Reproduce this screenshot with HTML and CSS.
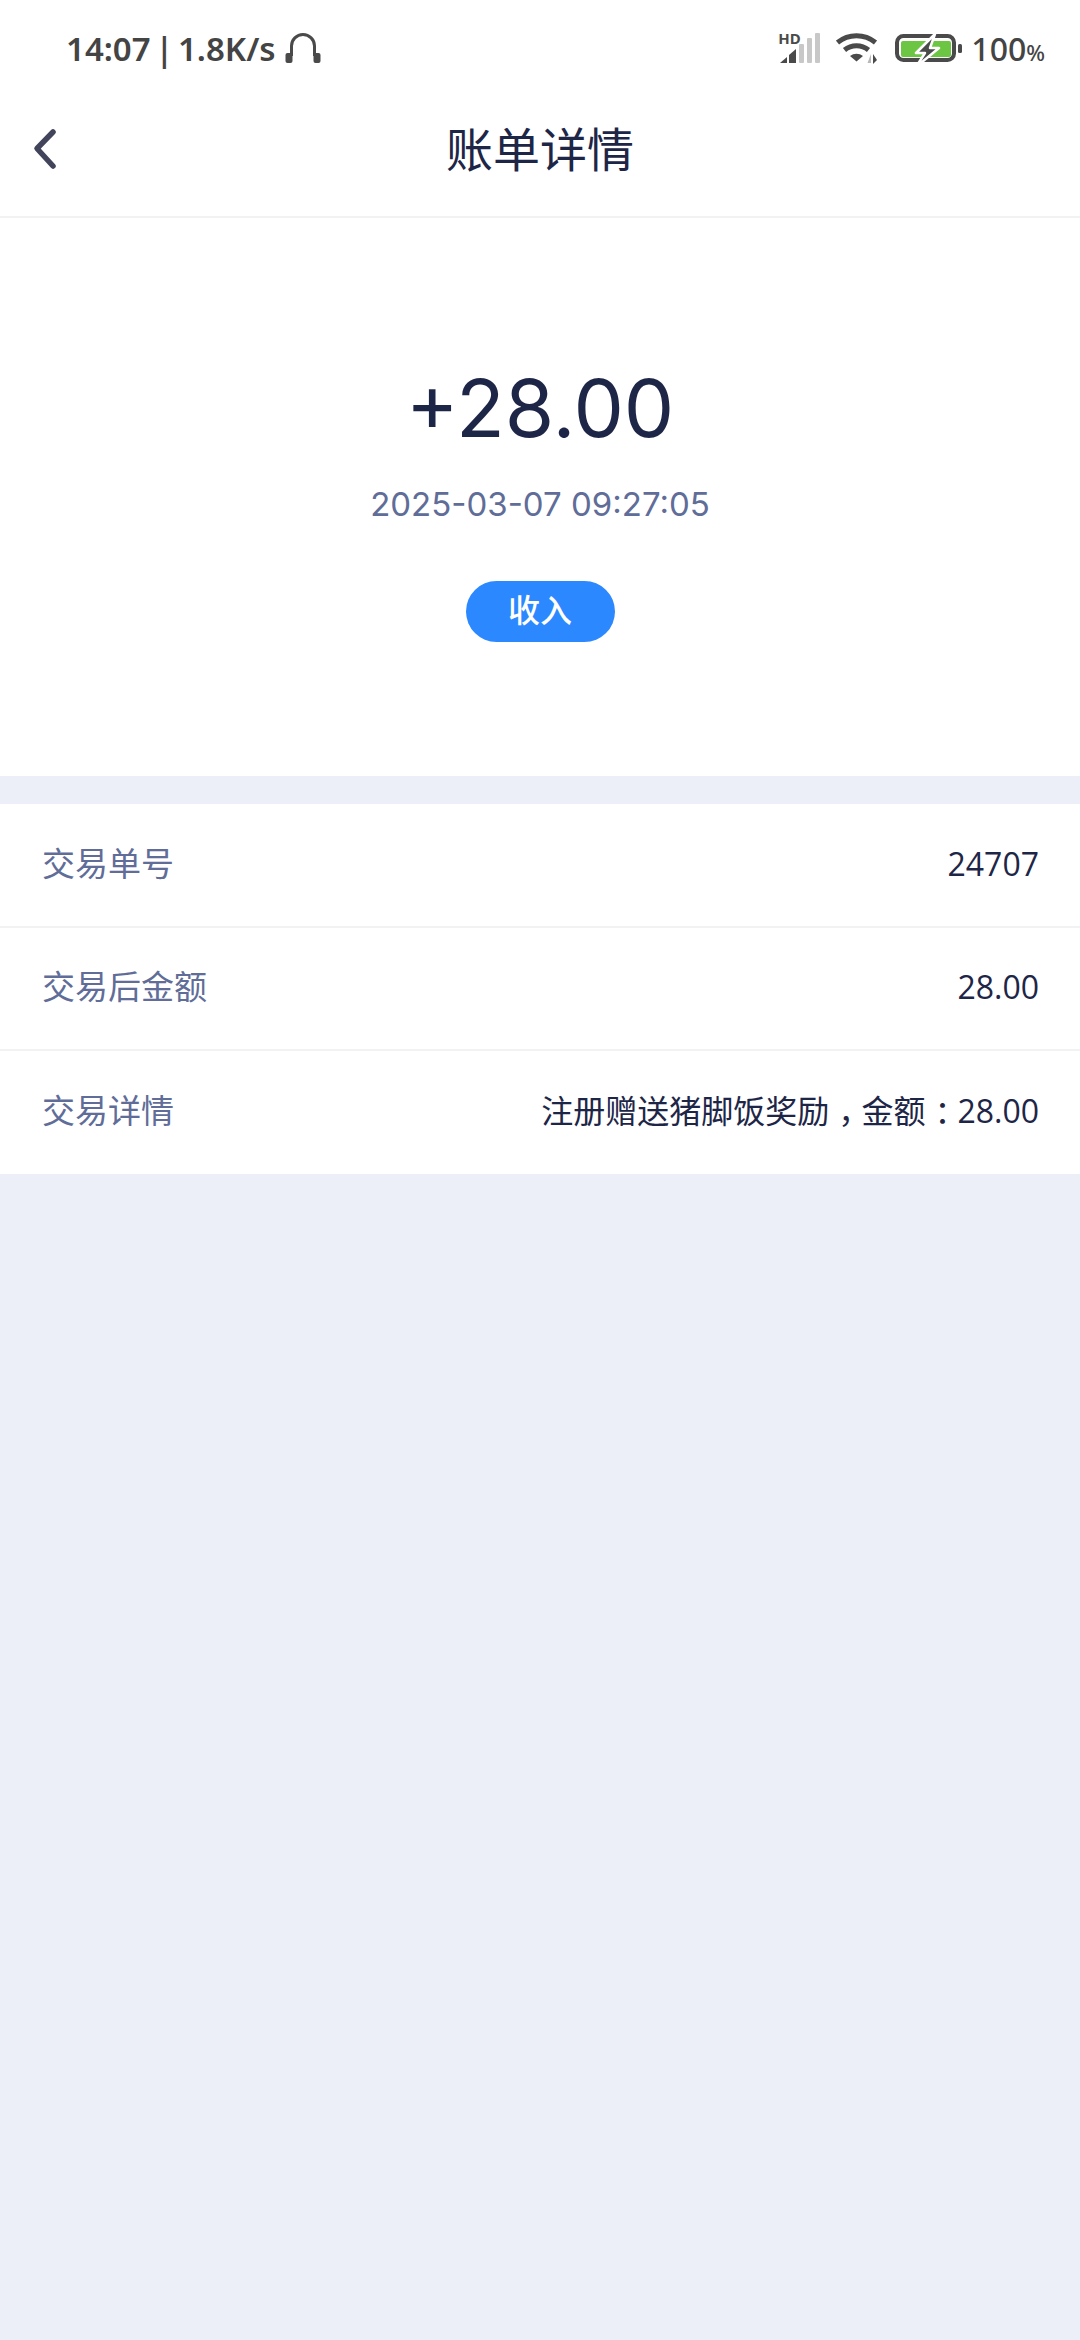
FILE: index.html
```html
<!DOCTYPE html>
<html lang="zh-CN">
<head>
    <meta charset="UTF-8">
    <meta name="viewport" content="width=device-width, initial-scale=1.0">
    <title>账单详情</title>
    <link rel="stylesheet" href="styles.css">
</head>
<body>
    <div class="top">
        <!-- 状态栏 -->
        <div class="status-bar">
            <div class="status-left">
                <span class="status-text">14:07 | 1.8K/s</span>
                <svg class="icon-headset" viewBox="0 0 36 32" width="36" height="32">
                    <path d="M6.500 24V14a11.500 11.500 0 0 1 23 0v10" fill="none" stroke="#4a4a4a" stroke-width="3"/>
                    <rect x="0.500" y="21" width="7" height="10" rx="2" fill="#4a4a4a"/>
                    <rect x="28.500" y="21" width="7" height="10" rx="2" fill="#4a4a4a"/>
                </svg>
            </div>
            <div class="status-right">
                <div class="signal">
                    <span class="signal-hd">HD</span>
                    <svg viewBox="0 0 41 30" width="41" height="30">
                        <path d="M1 30l7-6v6z" fill="#4a4a4a"/>
                        <path d="M10 22l7-6v14h-7z" fill="#4a4a4a"/>
                        <rect x="20" y="11" width="5" height="19" rx="1" fill="#c8c8c8"/>
                        <rect x="28" y="5" width="5" height="25" rx="1" fill="#c8c8c8"/>
                        <rect x="36" y="0" width="5" height="30" rx="1" fill="#c8c8c8"/>
                    </svg>
                </div>
                <svg class="icon-wifi" viewBox="0 0 43 34" width="43" height="34">
                    <path d="M1.500 11.500a30 30 0 0 1 38 0M8.500 19a19 19 0 0 1 24 0" fill="none" stroke="#4a4a4a" stroke-width="5"/>
                    <path d="M14 25a11 11 0 0 1 13 0l-6.500 5.500z" fill="#4a4a4a"/>
                    <path d="M35 23v9h-3.500z" fill="#b8b8b8"/>
                    <path d="M37 33v-10l4 6z" fill="#4a4a4a"/>
                </svg>
                <svg class="icon-battery" viewBox="0 0 68 38" width="68" height="38">
                    <rect x="3" y="7" width="57" height="24" rx="6.500" fill="none" stroke="#4a4a4a" stroke-width="4"/>
                    <rect x="7" y="12" width="50" height="16" rx="2" fill="#6cc644"/>
                    <rect x="64" y="15" width="4" height="9" rx="1.500" fill="#4a4a4a"/>
                    <path d="M41 5L22 24h9l-9 14 23-19h-9l5-14z" fill="#4a4a4a" stroke="#fff" stroke-width="2.500" stroke-linejoin="round"/>
                </svg>
                <span class="status-text battery-num">100<small>%</small></span>
            </div>
        </div>

        <!-- 标题栏 -->
        <div class="nav-bar">
            <svg class="icon-back" viewBox="0 0 26 44" width="26" height="44">
                <path d="M21 4L5 20.500 21 38" fill="none" stroke="#41445a" stroke-width="5.500" stroke-linecap="round" stroke-linejoin="round"/>
            </svg>
            <h1 class="nav-title">账单详情</h1>
        </div>
    </div>

    <div class="summary">
        <div class="amount">+28.00</div>
        <div class="time">2025-03-07 09:27:05</div>
        <div class="tag">收入</div>
    </div>

    <div class="detail-list">
        <div class="detail-row">
            <span class="detail-label">交易单号</span>
            <span class="detail-value">24707</span>
        </div>
        <div class="detail-row">
            <span class="detail-label">交易后金额</span>
            <span class="detail-value">28.00</span>
        </div>
        <div class="detail-row">
            <span class="detail-label">交易详情</span>
            <span class="detail-value">注册赠送猪脚饭奖励<span class="punct">，</span>金额<span class="punct">：</span>28.00</span>
        </div>
    </div>
</body>
</html>
```

FILE: styles.css
```css
:root {
    --primary: #1e2647;
    --muted: #5f6d98;
    --bg: #eceff7;
    --line: #f1f2f4;
    --blue: #2b88ff;
}

* {
    margin: 0;
    padding: 0;
    box-sizing: border-box;
}

body {
    width: 1080px;
    font-family: Inter, "Noto Sans CJK SC", sans-serif;
    background: var(--bg);
    color: var(--primary);
}

.top {
    background: white;
    border-bottom: 2px solid var(--line);
}

.status-bar {
    height: 96px;
    padding: 0 35px 0 66px;
    display: flex;
    justify-content: space-between;
    align-items: center;
    color: #444;
}

.status-left,
.status-right {
    display: flex;
    align-items: center;
}

.status-text {
    font-family: "Noto Sans", sans-serif;
    font-size: 33px;
    font-weight: 600;
    word-spacing: -4px;
}

.icon-headset {
    margin-left: 9px;
}

.signal {
    position: relative;
    width: 41px;
    height: 30px;
}

.signal-hd {
    position: absolute;
    top: -1px;
    left: -1px;
    font-family: "Noto Sans", sans-serif;
    font-size: 15px;
    font-weight: 700;
    line-height: 12px;
    color: #4a4a4a;
}

.icon-wifi {
    margin-left: 16px;
}

.icon-battery {
    margin-left: 15px;
}

.battery-num {
    margin-left: 9px;
    font-weight: 500;
    font-size: 32px;
}

.battery-num small {
    font-size: 22px;
}

.nav-bar {
    height: 120px;
    position: relative;
    display: flex;
    justify-content: center;
    padding-top: 30px;
}

.icon-back {
    position: absolute;
    left: 32px;
    top: 32px;
}

.nav-title {
    font-size: 47px;
    font-weight: 400;
    line-height: 1;
}

.summary {
    height: 558px;
    background: white;
    display: flex;
    flex-direction: column;
    align-items: center;
    padding-top: 136px;
}

.amount {
    font-size: 80px;
    line-height: 108px;
}

.time {
    margin-top: 20px;
    font-size: 33px;
    line-height: 44px;
    color: var(--muted);
}

.tag {
    margin-top: 55px;
    width: 149px;
    height: 61px;
    border-radius: 31px;
    background: var(--blue);
    color: white;
    font-size: 32px;
    font-weight: 500;
    line-height: 59px;
    text-align: center;
}

.detail-list {
    margin-top: 28px;
    background: white;
}

.detail-row {
    height: 123px;
    padding: 0 41px 3px 42px;
    display: flex;
    justify-content: space-between;
    align-items: center;
    border-bottom: 2px solid var(--line);
}

.detail-row:first-child {
    height: 124px;
}

.detail-row:last-child {
    border-bottom: none;
}

.detail-label {
    font-size: 33px;
    line-height: 44px;
    color: var(--muted);
}

.detail-value {
    font-family: "Open Sans", "Noto Sans CJK SC", sans-serif;
    font-size: 32px;
    line-height: 44px;
}

/* 全角标点靠左，这里挪到中间 */
.punct {
    margin-left: 9px;
    letter-spacing: -9px;
}
```
